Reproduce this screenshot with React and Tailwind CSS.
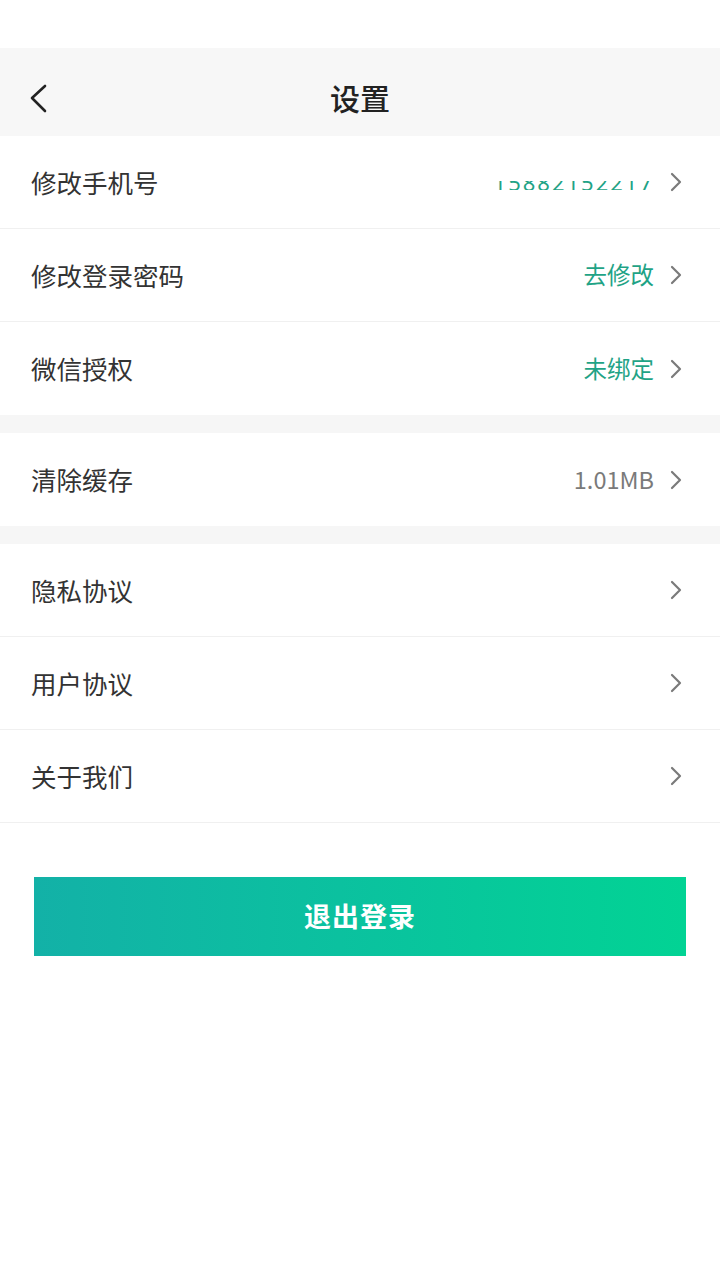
const font = { fontFamily: '"Noto Sans CJK SC", "Noto Sans", sans-serif' }

function Arrow() {
  return (
    <svg width="16" height="24" viewBox="0 0 16 24" className="ml-[14px] shrink-0">
      <path d="M4 4 L12 12 L4 20" fill="none" stroke="#7a7a7a" strokeWidth="2.2" strokeLinecap="round" strokeLinejoin="round" />
    </svg>
  )
}

function Row({ label, value, valueClass = 'text-[#7a7a7a]', last }) {
  return (
    <div className={`flex h-[93px] items-center justify-between bg-white pl-[31px] pr-[36px] ${last ? '' : 'border-b border-[#f0f0f0]'}`}>
      <span className="text-[25.5px] text-[#333333]">{label}</span>
      <div className="flex items-center">
        {value && <span className={`text-[23.5px] ${valueClass}`}>{value}</span>}
        <Arrow />
      </div>
    </div>
  )
}

function PhoneValue() {
  // the number is mostly cut off in the screenshot, only its lower half shows
  return (
    <div className="h-[9px] overflow-hidden">
      <div className="-mt-[14px] text-[22px] leading-[30px] tracking-[2px] text-[#1fa386]" style={{ fontFamily: '"Noto Sans", sans-serif' }}>
        15882152217
      </div>
    </div>
  )
}

export default function App() {
  return (
    <div className="min-h-[1280px] bg-white" style={font}>
      <div className="h-[48px] bg-white" />
      <header className="relative flex h-[88px] items-center justify-center bg-[#f7f7f7]">
        <svg width="24" height="32" viewBox="0 0 24 32" className="absolute left-[27px] top-[35px]">
          <path d="M18 3 L5 15 L18 28" fill="none" stroke="#222222" strokeWidth="2.6" strokeLinecap="round" strokeLinejoin="round" />
        </svg>
        <h1 className="pt-[10px] text-[30px] font-medium text-[#222222]">设置</h1>
      </header>

      <div className="flex h-[93px] items-center justify-between border-b border-[#f0f0f0] bg-white pl-[31px] pr-[36px]">
        <span className="text-[25.5px] text-[#333333]">修改手机号</span>
        <div className="flex items-center">
          <div className="pt-[6px]"><PhoneValue /></div>
          <Arrow />
        </div>
      </div>
      <Row label="修改登录密码" value="去修改" valueClass="text-[#1fa386]" />
      <Row label="微信授权" value="未绑定" valueClass="text-[#1fa386]" last />

      <div className="h-[18px] bg-[#f6f6f6]" />
      <Row label="清除缓存" value="1.01MB" last />
      <div className="h-[18px] bg-[#f6f6f6]" />

      <Row label="隐私协议" />
      <Row label="用户协议" />
      <Row label="关于我们" />

      <div className="px-[34px] pt-[54px]">
        <button className="flex h-[79px] w-full items-center justify-center bg-gradient-to-r from-[#13b1a7] to-[#02d394] text-[27px] font-bold tracking-[1px] text-white">
          退出登录
        </button>
      </div>
    </div>
  )
}
